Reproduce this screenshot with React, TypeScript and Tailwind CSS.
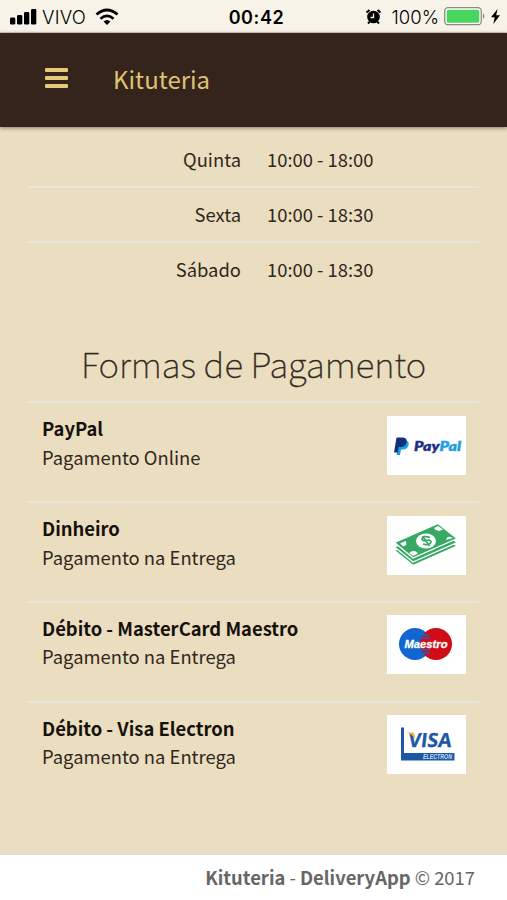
import React from 'react';

const hours = [
  { day: 'Quinta', time: '10:00 - 18:00' },
  { day: 'Sexta', time: '10:00 - 18:30' },
  { day: 'Sábado', time: '10:00 - 18:30' },
];

function PayPalLogo() {
  return (
    <svg viewBox="0 0 79 59" className="w-full h-full">
      <path d="M13 24h5q4.500 1 3.500 5-1 4.500-6 4.500h-1.500L13 39H9.500z" fill="#1b9fe0" />
      <path d="M9.500 21.500h6.500q4.500.5 3.500 5-1 4.500-6 4.500h-1.800l-1 5.500H7z" fill="#12307c" />
      <text x="27" y="35" fontSize="13" fontWeight="800" fontStyle="italic" fontFamily="Lato, sans-serif" strokeWidth=".3" textLength="47" lengthAdjust="spacingAndGlyphs">
        <tspan fill="#1d2f86" stroke="#1d2f86">Pay</tspan>
        <tspan fill="#1b9ee0" stroke="#1b9ee0">Pal</tspan>
      </text>
    </svg>
  );
}

function CashIcon() {
  return (
    <svg viewBox="0 0 79 59" className="w-full h-full">
      <g fill="#37a965" stroke="#fff" strokeWidth="1.300">
        <path d="M7.500 34.500 51 16.500 70 30 26 49.500z" />
        <path d="M7.500 31 51 12.500 70 26.500 26 46z" />
        <path d="M7.500 26.500 51 7.500 70 22.500 26 42z" />
      </g>
      <g fill="#fff">
        <path d="M13 27.500 18.500 25Q21 29 16.500 30.500z" />
        <path d="M47 12 51 10 56 13.500Q50 17 47 12z" />
        <path d="M59 24Q60 18.500 66 22z" />
        <path d="M22 37Q27 33 31 37.500L26 40z" />
        <ellipse cx="39" cy="25" rx="10" ry="7.500" />
      </g>
      <path d="M43 21.500Q36 19 35 23q0 2 4 1.500 5-1 5 1.500-1 4-8 2M35.500 20 42.500 30" fill="none" stroke="#37a965" strokeWidth="1.700" />
    </svg>
  );
}

function MaestroLogo() {
  return (
    <svg viewBox="0 0 79 59" className="w-full h-full">
      <circle cx="28" cy="29" r="16" fill="#1266cf" />
      <circle cx="49" cy="29" r="16" fill="#cf0d18" />
      <path d="M35 20h7M34 23h9M34 35h9M35 38h7" stroke="#1266cf" strokeWidth="1.300" />
      <text x="17.500" y="33" fontSize="11.500" fontWeight="700" fontStyle="italic" fill="#fff" stroke="#fff" strokeWidth=".3" fontFamily="'Liberation Sans', sans-serif" textLength="43" lengthAdjust="spacingAndGlyphs">Maestro</text>
    </svg>
  );
}

function VisaLogo() {
  return (
    <svg viewBox="0 0 79 59" className="w-full h-full">
      <path d="M14 12.500h3V38h50.500v7.500H14z" fill="#1d57a5" />
      <text x="21" y="32" fontSize="19.500" fontWeight="700" fill="#1d57a5" stroke="#1d57a5" strokeWidth=".3" fontFamily="'Open Sans', sans-serif" textLength="43" lengthAdjust="spacingAndGlyphs" transform="translate(3.700 0) skewX(-7)">VISA</text>
      <path d="M19 17.500h7q1.800 1 2.200 6.500Q25 18.500 19 17.500z" fill="#f3b229" />
      <text x="36" y="44.200" fontSize="6.500" fontWeight="700" fontStyle="italic" fill="#c9dcf1" fontFamily="'Liberation Sans', sans-serif" textLength="29" lengthAdjust="spacingAndGlyphs">ELECTRON</text>
    </svg>
  );
}

const payments = [
  { name: 'PayPal', type: 'Pagamento Online', Logo: PayPalLogo },
  { name: 'Dinheiro', type: 'Pagamento na Entrega', Logo: CashIcon },
  { name: 'Débito - MasterCard Maestro', type: 'Pagamento na Entrega', Logo: MaestroLogo },
  { name: 'Débito - Visa Electron', type: 'Pagamento na Entrega', Logo: VisaLogo },
];

function StatusBar() {
  return (
    <div className="h-[33px] shrink-0 bg-[#f8f3e8] grid grid-cols-3 items-center pt-px font-['Inter',sans-serif] text-black border-b border-[#d8cfc2]">
      <div className="flex items-center pl-[10px]">
        <svg width="27" height="17" viewBox="0 0 27 17">
          <rect x="0" y="9.500" width="5.300" height="7" rx="1.300" />
          <rect x="7" y="7" width="5.300" height="9.500" rx="1.300" />
          <rect x="14" y="4" width="5.300" height="12.500" rx="1.300" />
          <rect x="21" y="1" width="5.300" height="15.500" rx="1.300" />
        </svg>
        <span className="ml-[5px] mt-px text-[18.500px] leading-none font-light tracking-[0.2px]">VIVO</span>
        <svg width="24" height="18" viewBox="0 0 24 18" className="ml-[9px]" fill="none" stroke="#000" strokeWidth="2.700">
          <path d="M1.500 6.500Q12-2.500 22.500 6.500" />
          <path d="M5.500 10.700Q12 5 18.500 10.700" />
          <path d="M8.500 13.500Q12 10.500 15.500 13.500L12 17z" fill="#000" stroke="none" />
        </svg>
      </div>
      <div className="mt-[3px] pl-[6px] text-center text-[18px] leading-none font-semibold tracking-[0.6px]">00:42</div>
      <div className="flex items-center justify-end pr-[7px]">
        <svg width="17" height="17" viewBox="0 0 17 17">
          <circle cx="8.500" cy="9" r="6.300" />
          <path d="M1.500 4.500 4.500 2M12.500 2 15.500 4.500M4.500 14 3 15.500M12.500 14l1.500 1.500" stroke="#000" strokeWidth="2" />
          <path d="M8.500 5.500v4H5.500" fill="none" stroke="#f8f3e8" strokeWidth="1.300" />
        </svg>
        <span className="ml-[10px] mt-px text-[18.500px] leading-none font-light">100%</span>
        <svg width="42" height="19" viewBox="0 0 42 19" className="ml-[5px]">
          <rect x=".7" y=".7" width="36.600" height="17" rx="3.500" fill="#fff" stroke="#8b8981" strokeWidth="1.300" />
          <rect x="2.700" y="2.700" width="32.600" height="13" rx="1.500" fill="#48d65e" />
          <path d="M39 6.500q3 2.700 0 5.500z" fill="#8b8981" />
        </svg>
        <svg width="9" height="15" viewBox="0 0 9 15" className="ml-[5px]">
          <path d="M6.500 0 0 8.300h3.700L2.300 15 9 6.200H5.200z" />
        </svg>
      </div>
    </div>
  );
}

export default function App() {
  return (
    <div className="w-[507px] h-[900px] overflow-hidden flex flex-col bg-[#ebdec0] font-['Noto_Sans_CJK_JP',sans-serif] text-[#302720]">
      <StatusBar />
      <header className="h-[94px] shrink-0 bg-[#34241b] flex items-center pl-[45px] text-[#dfc373] shadow-[0_1px_4px_rgba(0,0,0,0.45)]">
        <button className="flex flex-col gap-1 -mt-1" aria-label="Menu">
          <span className="w-[23px] h-1 rounded-[1px] bg-[#e5c878]" />
          <span className="w-[23px] h-1 rounded-[1px] bg-[#e5c878]" />
          <span className="w-[23px] h-1 rounded-[1px] bg-[#e5c878]" />
        </button>
        <h1 className="ml-[45px] -mt-0.5 text-[24px] leading-[30px]">Kituteria</h1>
      </header>

      <main className="flex-1 px-7">
        <div className="pt-[6px]">
          {hours.map((row, i) => (
            <div key={i} className="flex h-[55px] items-center border-b-2 border-[#e8e5da] pb-0.5 last:border-0 last:pb-1 text-[18.400px] leading-7">
              <span className="w-[213px] text-right">{row.day}</span>
              <span className="ml-[26px]">{row.time}</span>
            </div>
          ))}
        </div>

        <h2 className="mt-[38px] text-center text-[34.900px] leading-[54px] font-thin [-webkit-text-stroke:0.4px_#302720]">Formas de Pagamento</h2>

        <div className="mt-[11.300px]">
          {payments.map(({ name, type, Logo }, i) => (
            <div key={i} className="flex h-[99.800px] justify-between border-t-2 border-[#e8e5da] px-[14px] pr-[13px] pt-[12px]">
              <div className="-mt-px text-[18.400px] leading-[28.600px]">
                <div className="font-bold text-[#17110d]">{name}</div>
                <div>{type}</div>
              </div>
              <div className="w-[79px] h-[59px] mt-[0.500px] bg-white">
                <Logo />
              </div>
            </div>
          ))}
        </div>
      </main>

      <footer className="h-[46px] shrink-0 bg-white border-t border-[#dcdcdc] pr-8 text-right text-[18.400px] leading-[44px] text-[#666]">
        <strong>Kituteria</strong> - <strong>DeliveryApp</strong> © 2017
      </footer>
    </div>
  );
}
